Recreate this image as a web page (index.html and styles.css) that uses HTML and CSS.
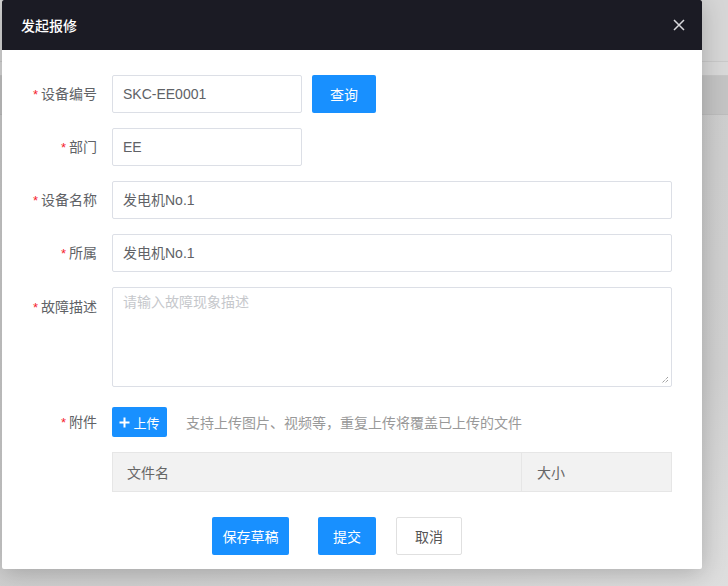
FILE: index.html
```html
<!DOCTYPE html>
<html lang="zh-CN">
<head>
<meta charset="utf-8">
<title>发起报修</title>
<link rel="stylesheet" href="styles.css">
</head>
<body>
<div class="page">
  <div class="page-top"></div>
  <div class="page-line"></div>
  <div class="page-sub"></div>
  <div class="page-band"></div>
  <div class="page-rest"></div>
</div>
<div class="modal">
  <div class="modal-header">
    <span class="modal-title">发起报修</span>
    <svg class="close" width="12" height="12" viewBox="0 0 12 12"><path d="M1 1L11 11M11 1L1 11" stroke="#d9d9dc" stroke-width="1.5" fill="none"/></svg>
  </div>
  <div class="modal-body">
    <div class="row">
      <label class="label"><span class="star">*</span>设备编号</label>
      <div class="input short">SKC-EE0001</div>
      <button class="btn primary query">查询</button>
    </div>
    <div class="row">
      <label class="label"><span class="star">*</span>部门</label>
      <div class="input short">EE</div>
    </div>
    <div class="row">
      <label class="label"><span class="star">*</span>设备名称</label>
      <div class="input long">发电机No.1</div>
    </div>
    <div class="row">
      <label class="label"><span class="star">*</span>所属</label>
      <div class="input long">发电机No.1</div>
    </div>
    <div class="row top">
      <label class="label"><span class="star">*</span>故障描述</label>
      <div class="textarea long">
        <span class="placeholder">请输入故障现象描述</span>
        <svg class="grip" width="8" height="8" viewBox="0 0 8 8"><path d="M7 1L1 7M7 4L4 7" stroke="#777" stroke-width="1" fill="none" stroke-dasharray="1 1"/></svg>
      </div>
    </div>
    <div class="row upload-row">
      <label class="label"><span class="star">*</span>附件</label>
      <button class="btn primary upload"><svg width="11" height="11" viewBox="0 0 11 11"><path d="M5.5 0.5V10.5M0.5 5.5H10.5" stroke="#fff" stroke-width="2" fill="none"/></svg>上传</button>
      <span class="hint">支持上传图片、视频等，重复上传将覆盖已上传的文件</span>
    </div>
    <div class="table">
      <div class="th name">文件名</div>
      <div class="th size">大小</div>
    </div>
    <div class="footer">
      <button class="btn primary draft">保存草稿</button>
      <button class="btn primary submit">提交</button>
      <button class="btn cancel">取消</button>
    </div>
  </div>
</div>
</body>
</html>
```
FILE: styles.css
```css
* { box-sizing: border-box; }
html, body { margin: 0; padding: 0; }
body {
  width: 728px;
  height: 586px;
  overflow: hidden;
  position: relative;
  background: #d2d2d2;
  font-family: "Liberation Sans", Arial, "Noto Sans CJK SC", sans-serif;
  font-size: 14px;
}
.page { display: flex; flex-direction: column; height: 100%; }
.page-top { height: 61px; background: #d6d6d6; }
.page-line { height: 1px; background: #c9c9c9; }
.page-sub { height: 14px; background: #d8d8d8; border-bottom: 1px solid #c6c6c6; }
.page-band { height: 39px; background: #c3c3c3; border-bottom: 1px solid #bcbcbc; }
.page-rest { flex: 1; background: linear-gradient(160deg, #cbcbcb 0%, #d0d0d0 70%, #dedede 100%); }

.modal {
  position: absolute;
  left: 2px;
  top: 0;
  width: 700px;
  height: 569px;
  background: #fff;
  border-radius: 0 0 2px 2px;
  box-shadow: 0 4px 24px rgba(0,0,0,0.22);
  display: flex;
  flex-direction: column;
}
.modal-header {
  height: 50px;
  background: #1b1b24;
  display: flex;
  align-items: center;
  justify-content: space-between;
  padding: 0 17px 0 19px;
  border-radius: 2px 2px 0 0;
}
.modal-title { color: #fff; font-size: 14px; font-family: "Noto Sans CJK SC", sans-serif; font-weight: 500; }
.close { display: block; }

.modal-body { padding: 25px 0 0 0; display: flex; flex-direction: column; }
.row { display: flex; align-items: center; margin-bottom: 15px; height: 38px; }
.row.top { align-items: flex-start; height: 100px; margin-bottom: 20px; }
.label {
  width: 95px;
  text-align: right;
  color: #606266;
  font-family: "Noto Sans CJK SC", sans-serif;
  font-size: 14px;
  line-height: 38px;
  margin-right: 15px;
  flex-shrink: 0;
}
.star { color: #f5222d; margin-right: 3px; font-family: "Liberation Sans", sans-serif; font-size: 13px; }
.input {
  height: 38px;
  border: 1px solid #dcdfe6;
  border-radius: 2px;
  padding: 0 10px;
  line-height: 36px;
  color: #606266;
  font-size: 14px;
}
.short { width: 190px; }
.long { width: 560px; }
.textarea {
  height: 100px;
  border: 1px solid #dcdfe6;
  border-radius: 2px;
  padding: 3px 10px;
  position: relative;
  font-family: "Noto Sans CJK SC", sans-serif;
}
.placeholder { color: #c6c8cc; font-size: 14px; }
.grip { position: absolute; right: 2px; bottom: 2px; }

.btn {
  border: none;
  font-family: "Noto Sans CJK SC", sans-serif;
  font-size: 14px;
  border-radius: 2px;
  cursor: pointer;
  padding: 0;
}
.primary { background: #1890ff; color: #fff; }
.query { width: 64px; height: 38px; margin-left: 10px; }

.upload-row { height: 30px; margin-bottom: 15px; }
.upload-row .label { line-height: 30px; }
.upload {
  width: 55px;
  height: 30px;
  font-size: 13px;
  display: flex;
  align-items: center;
  justify-content: center;
  gap: 3px;
}
.hint { margin-left: 19px; color: #999; font-size: 14px; font-family: "Noto Sans CJK SC", sans-serif; }

.table {
  margin-left: 110px;
  width: 560px;
  height: 40px;
  display: flex;
  background: #f2f2f2;
  border: 1px solid #e6e6e6;
  font-family: "Noto Sans CJK SC", sans-serif;
  color: #666;
  font-size: 14px;
}
.th { line-height: 38px; padding-left: 14px; }
.name { width: 409px; border-right: 1px solid #e6e6e6; }
.size { flex: 1; padding-left: 15px; }

.footer { display: flex; margin: 25px 0 0 210px; }
.footer .btn { height: 38px; }
.draft { width: 77px; margin-right: 29px; }
.submit { width: 58px; margin-right: 20px; }
.cancel { width: 66px; background: #fff; color: #555; border: 1px solid #e0e0e0; }
```
